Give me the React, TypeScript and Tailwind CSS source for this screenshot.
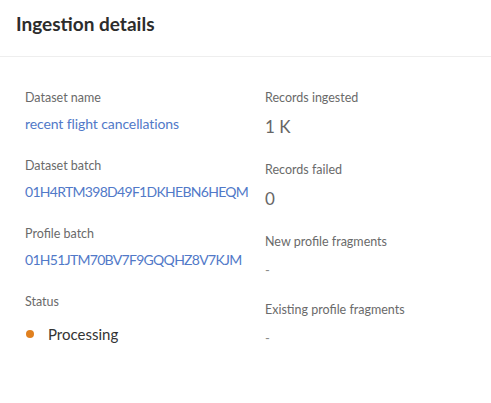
export default function App() {
  return (
    <div className="w-[491px] h-[403px] bg-white text-[#4b4b4b] overflow-hidden" style={{ fontFamily: 'Lato, "Noto Sans", sans-serif' }}>
      {/* header */}
      <div className="h-[57px] border-b border-[#eeeeee] pl-4 pt-[11px]">
        <h1 className="text-[19px] font-bold text-[#2c2c2c] leading-[26px]">Ingestion details</h1>
      </div>

      <div className="flex pl-[25px] pt-[33px]">
        {/* left column */}
        <div className="w-[240px] flex flex-col">
          <Field label="Dataset name" value="recent flight cancellations" />
          <Field label="Dataset batch" value="01H4RTM398D49F1DKHEBN6HEQM" id />
          <Field label="Profile batch" value="01H51JTM70BV7F9GQQHZ8V7KJM" id />
          <div className="h-[68px]">
            <div className="text-[12.5px] text-[#6a6a6a] leading-[16px]">Status</div>
            <div className="flex items-center mt-[14px]">
              <span className="w-[8px] h-[8px] rounded-full bg-[#e0801f] ml-[1px]" />
              <span className="ml-[14px] text-[15px] leading-[20px] text-[#333333]">Processing</span>
            </div>
          </div>
        </div>

        {/* right column */}
        <div className="flex flex-col">
          <Stat label="Records ingested" value="1 K" h="h-[72px]" />
          <Stat label="Records failed" value="0" h="h-[72px]" />
          <Stat label="New profile fragments" value="-" h="h-[68px]" small />
          <Stat label="Existing profile fragments" value="-" h="h-[68px]" small />
        </div>
      </div>
    </div>
  );
}

function Field({ label, value, id }: { label: string; value: string; id?: boolean }) {
  return (
    <div className="h-[68px]">
      <div className="text-[12.5px] text-[#6a6a6a] leading-[16px]">{label}</div>
      <div className={`mt-[8px] text-[14px] leading-[20px] text-[#5179c8] ${id ? 'tracking-[-0.7px]' : 'tracking-[-0.1px]'}`}>{value}</div>
    </div>
  );
}

function Stat({ label, value, h, small }: { label: string; value: string; h: string; small?: boolean }) {
  return (
    <div className={h}>
      <div className="text-[12.5px] text-[#6a6a6a] leading-[16px]">{label}</div>
      <div className={small ? 'mt-[10px] text-[13px] leading-[20px] text-[#8a8a8a]' : 'mt-[10px] text-[17px] leading-[22px] text-[#666666]'}>{value}</div>
    </div>
  );
}
